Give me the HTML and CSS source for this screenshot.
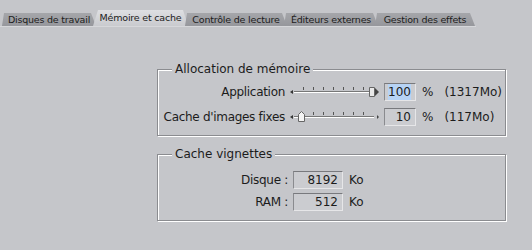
FILE: index.html
```html
<!DOCTYPE html>
<html lang="fr">
<head>
  <meta charset="UTF-8">
  <title>Préférences</title>
  <link rel="stylesheet" href="styles.css">
</head>
<body>
  <div class="tabs">
    <div class="tab tab-disks">Disques de travail</div>
    <div class="tab tab-memory active">Mémoire et cache</div>
    <div class="tab tab-playback">Contrôle de lecture</div>
    <div class="tab tab-editors">Éditeurs externes</div>
    <div class="tab tab-effects">Gestion des effets</div>
  </div>

  <div class="panel">
    <fieldset class="group group-memory">
      <legend>Allocation de mémoire</legend>
      <div class="row">
        <span class="label">Application</span>
        <svg class="slider" width="96" height="18" viewBox="0 0 96 18">
          <path d="M4 9 L7 7 L7 11 Z" fill="#333"/>
          <rect x="8" y="8" width="80" height="2" fill="#fff"/>
          <line x1="8" y1="8.5" x2="88" y2="8.5" stroke="#777" stroke-width="1"/>
          <g stroke="#555" stroke-width="1">
            <line x1="17.5" y1="4" x2="17.5" y2="7"/>
            <line x1="27.5" y1="4" x2="27.5" y2="7"/>
            <line x1="37.5" y1="4" x2="37.5" y2="7"/>
            <line x1="47.5" y1="4" x2="47.5" y2="7"/>
            <line x1="57.5" y1="4" x2="57.5" y2="7"/>
            <line x1="67.5" y1="4" x2="67.5" y2="7"/>
            <line x1="77.5" y1="4" x2="77.5" y2="7"/>
          </g>
          <path d="M83.5 4.5 H88.5 V13.5 H83.5 Z" fill="#e8e8e8" stroke="#666"/>
          <path d="M89 5 L93 9 L89 13 Z" fill="#444"/>
        </svg>
        <span class="field"><span class="selected">100</span></span>
        <span class="unit">%</span>
        <span class="amount">(1317Mo)</span>
      </div>
      <div class="row">
        <span class="label">Cache d'images fixes</span>
        <svg class="slider" width="96" height="18" viewBox="0 0 96 18">
          <path d="M4 9 L7 7 L7 11 Z" fill="#333"/>
          <rect x="8" y="8" width="80" height="2" fill="#fff"/>
          <line x1="8" y1="8.5" x2="88" y2="8.5" stroke="#777" stroke-width="1"/>
          <g stroke="#555" stroke-width="1">
            <line x1="27.5" y1="4" x2="27.5" y2="7"/>
            <line x1="37.5" y1="4" x2="37.5" y2="7"/>
            <line x1="47.5" y1="4" x2="47.5" y2="7"/>
            <line x1="57.5" y1="4" x2="57.5" y2="7"/>
            <line x1="67.5" y1="4" x2="67.5" y2="7"/>
            <line x1="77.5" y1="4" x2="77.5" y2="7"/>
          </g>
          <path d="M12.5 6.5 L15.5 3.5 L18.5 6.5 V13.5 H12.5 Z" fill="#f4f4f4" stroke="#666"/>
          <path d="M91 7 L93 9 L91 11 Z" fill="#444"/>
        </svg>
        <span class="field">10</span>
        <span class="unit">%</span>
        <span class="amount">(117Mo)</span>
      </div>
    </fieldset>

    <fieldset class="group group-thumbs">
      <legend>Cache vignettes</legend>
      <div class="row">
        <span class="label">Disque :</span>
        <span class="field wide">8192</span>
        <span class="unit">Ko</span>
      </div>
      <div class="row">
        <span class="label">RAM :</span>
        <span class="field wide">512</span>
        <span class="unit">Ko</span>
      </div>
    </fieldset>
  </div>
</body>
</html>
```

FILE: styles.css
```css
body {
  margin: 0;
  width: 532px;
  height: 250px;
  background-color: #c5c6ca;
  font-family: 'DejaVu Sans', 'Liberation Sans', sans-serif;
  color: #1c1c1c;
  overflow: hidden;
}

.tabs {
  display: flex;
  padding: 10px 0 0 2px;
  height: 16px;
  border-bottom: 1px solid #d6d7da;
  width: 474px;
}

.tab {
  flex: none;
  height: 13px;
  margin-top: 3px;
  margin-right: -3px;
  font-size: 9.5px;
  letter-spacing: -0.2px;
  line-height: 13px;
  text-align: center;
  white-space: nowrap;
  background: linear-gradient(#a5a6aa, #96979c);
  clip-path: polygon(2px 0, calc(100% - 5px) 0, 100% 100%, 0 100%);
}

.tab-disks { width: 94px; }
.tab-memory { width: 95px; }
.tab-playback { width: 102px; }
.tab-editors { width: 94px; }
.tab-effects { width: 100px; }

.tab.active {
  height: 16px;
  margin-top: 0;
  line-height: 16px;
  background: linear-gradient(#dedfe2, #c9cace);
  clip-path: polygon(5px 0, calc(100% - 5px) 0, 100% 100%, 0 100%);
}

.panel {
  padding: 35px 0 0 157px;
}

.group {
  width: 347px;
  margin: 0;
  padding: 0;
  border: 1px solid #8b8c90;
  box-shadow: inset 1px 1px 0 #fff, 1px 1px 0 #fff;
}

.group legend {
  margin-left: 14px;
  padding: 0 3px;
  font-size: 12px;
  line-height: 14px;
  background-color: #c5c6ca;
}

.group-memory {
  padding: 7px 0 9px;
}

.group-thumbs {
  margin-top: 11px;
  padding: 10px 0 9px;
}

.row {
  display: flex;
  align-items: center;
  height: 18px;
  font-size: 12px;
  white-space: nowrap;
}

.row + .row {
  margin-top: 7px;
}

.group-thumbs .row + .row {
  margin-top: 4px;
}

.label {
  display: flex;
  justify-content: flex-end;
  width: 127px;
  letter-spacing: -0.3px;
}

.group-thumbs .label {
  width: 130px;
}

.slider {
  margin-left: 1px;
}

.field {
  box-sizing: border-box;
  width: 32px;
  height: 18px;
  margin-left: 2px;
  padding-right: 4px;
  text-align: right;
  line-height: 16px;
  background-color: #cbccd0;
  border-top: 1px solid #78797d;
  border-left: 1px solid #8a8b8f;
  border-bottom: 1px solid #e6e6e8;
  border-right: 1px solid #e6e6e8;
}

.field.wide {
  width: 50px;
  margin-left: 5px;
}

.selected {
  background-color: #b6d3f5;
  padding: 1px 0;
}

.unit {
  margin-left: 6px;
}

.amount {
  margin-left: 11px;
}
```
